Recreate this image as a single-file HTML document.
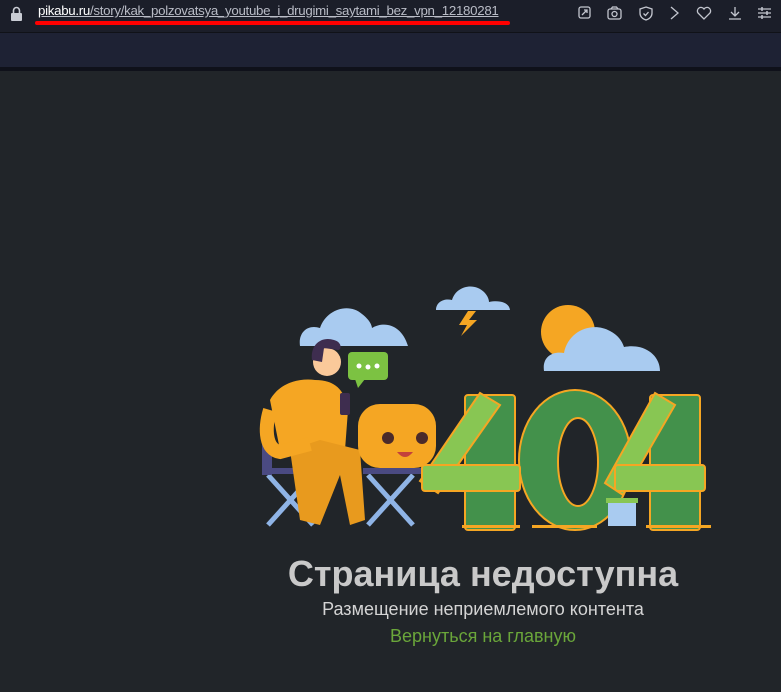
<!DOCTYPE html>
<html><head><meta charset="utf-8"><style>
html,body{margin:0;padding:0;width:781px;height:692px;overflow:hidden;background:#212529;font-family:"Liberation Sans",sans-serif}
.top{position:absolute;left:0;top:0;width:781px;height:32px;background:#1b1e29}
.bar2{position:absolute;left:0;top:32px;width:781px;height:35px;background:#1e2234;border-top:1px solid #101218}
.line{position:absolute;left:0;top:67px;width:781px;height:4px;background:#0f111a}
.url{position:absolute;left:38px;top:3px;font-size:13.3px;color:#b9bcc6;font-family:"Liberation Sans Narrow","Liberation Sans",sans-serif;letter-spacing:-0.3px;text-decoration:underline}
.url b{font-weight:normal;color:#fff}
.red{position:absolute;left:35px;top:21px;width:475px;height:4px;background:#f00;border-radius:2px}
.t1{position:absolute;left:0;width:966px;text-align:center;top:553px;font-size:36px;font-weight:bold;color:#c9c9c9}
.t2{position:absolute;left:0;width:966px;text-align:center;top:599px;font-size:18px;color:#d4d4d4}
.t3{position:absolute;left:0;width:966px;text-align:center;top:626px;font-size:18px;color:#6aa63a}
</style></head><body>
<div class="top"></div>
<svg style="position:absolute;left:10px;top:6px" width="14" height="16"><rect x="1" y="7" width="11" height="8" rx="1" fill="#c9ccd4"/><path d="M3.5 7V4.5a3 3 0 0 1 6 0V7" stroke="#c9ccd4" stroke-width="1.6" fill="none"/></svg>
<div class="url"><b>pikabu.ru</b>/story/kak_polzovatsya_youtube_i_drugimi_saytami_bez_vpn_12180281</div>
<div class="red"></div>
<svg style="position:absolute;left:576px;top:4px" width="200" height="18" fill="none" stroke="#c3c6cf" stroke-width="1.3">
<rect x="3" y="3" width="11" height="11" rx="2"/><path d="M6 11l5-5M8 6h3v3"/>
<rect x="32" y="5" width="13" height="10" rx="2"/><circle cx="38.5" cy="10" r="2.5"/><path d="M35 5l1.5-2h4L42 5"/>
<path d="M70 3l6 2v4c0 4-3 6-6 7-3-1-6-3-6-7V5z"/><path d="M67.5 9.5l2 2 3-3.5"/>
<path d="M95 3l7 6-7 6"/>
<path d="M128 15l-6-6a3.5 3.5 0 0 1 6-4 3.5 3.5 0 0 1 6 4z"/>
<path d="M159 3v9M155 8l4 4 4-4M153 15h12"/>
<path d="M182 5h13M182 9h13M182 13h13"/><path d="M186 3v4M191 7v4M186 11v4" stroke-width="1.5"/>
</svg>
<div class="bar2"></div>
<div class="line"></div>

<svg style="position:absolute;left:0;top:0" width="781" height="692">
<path d="M300 346c-2-14 8-22 20-18 6-18 28-26 42-14 8 6 10 12 10 14 14-8 30-2 36 18z" fill="#a9cbf0"/>
<path d="M436 310c0-8 8-12 16-10 4-14 22-18 32-8 4 4 5 8 5 10 10-2 20 0 21 8z" fill="#a9cbf0"/>
<path d="M468 311l-9 14h8l-6 11 16-16h-8l7-9z" fill="#f5a623"/>
<circle cx="568" cy="332" r="27" fill="#f5a623"/>
<path d="M544 371c-2-14 8-20 20-18 4-22 28-32 46-22 8 4 12 10 14 16 20-4 36 8 36 24z" fill="#a9cbf0"/>
<rect x="348" y="352" width="40" height="28" rx="4" fill="#7cc242"/><path d="M355 379l3 9 7-9z" fill="#7cc242"/>
<circle cx="359" cy="366" r="2.5" fill="#fff"/><circle cx="368" cy="367" r="2.5" fill="#fff"/><circle cx="377" cy="366" r="2.5" fill="#fff"/>
<g stroke="#8fb4e6" stroke-width="5"><path d="M268 475l45 50M313 475l-45 50M368 475l45 50M413 475l-45 50"/></g>
<rect x="264" y="468" width="56" height="6" fill="#4a4a82"/><rect x="363" y="468" width="68" height="6" fill="#4a4a82"/>
<rect x="262" y="425" width="10" height="50" fill="#4a4a82"/>
<path d="M270 400c10-18 30-22 45-20 20 0 30 10 33 30l-3 40 -35 5-30-5z" fill="#f5a623"/>
<path d="M290 450l30-10 40 10 5 70-15 5-10-50-20 50-20-5z" fill="#e89a1e"/>
<path d="M270 410c-6 20-4 40 10 42l30-8" fill="none" stroke="#f5a623" stroke-width="14"/>
<circle cx="327" cy="362" r="14" fill="#fac99a"/>
<path d="M312 360c-2-16 10-24 22-20 8 2 8 10 4 10l-14-2-2 14z" fill="#3e2d4f"/>
<rect x="340" y="393" width="10" height="22" rx="2" fill="#3e2d4f"/>
<rect x="358" y="404" width="78" height="64" rx="22" fill="#f5a623"/>
<circle cx="388" cy="438" r="6" fill="#4a2a2a"/><circle cx="422" cy="438" r="6" fill="#4a2a2a"/>
<path d="M397 452q8 10 16 0z" fill="#c3413b"/>
<g fill="#43914b" stroke="#f5a623" stroke-width="2">
<rect x="465" y="395" width="50" height="135" rx="3"/>
<ellipse cx="575" cy="460" rx="56" ry="70"/>
<rect x="650" y="395" width="50" height="135" rx="3"/>
</g>
<ellipse cx="578" cy="462" rx="20" ry="44" fill="#212529" stroke="#f5a623" stroke-width="2"/>
<g fill="#88c653" stroke="#f5a623" stroke-width="2">
<path d="M480 393l20 12-62 88-18-12z"/>
<rect x="422" y="465" width="98" height="26" rx="3"/>
<path d="M655 393l20 12-52 90-18-12z"/>
<rect x="615" y="465" width="90" height="26" rx="3"/>
</g>
<rect x="608" y="502" width="28" height="24" fill="#a9cbf0"/><rect x="606" y="498" width="32" height="5" fill="#88c653"/>
<g fill="#f5a623"><rect x="462" y="525" width="58" height="3"/><rect x="532" y="525" width="65" height="3"/><rect x="646" y="525" width="65" height="3"/></g>
</svg>

<div class="t1">Страница недоступна</div>
<div class="t2">Размещение неприемлемого контента</div>
<div class="t3">Вернуться на главную</div>
</body></html>
